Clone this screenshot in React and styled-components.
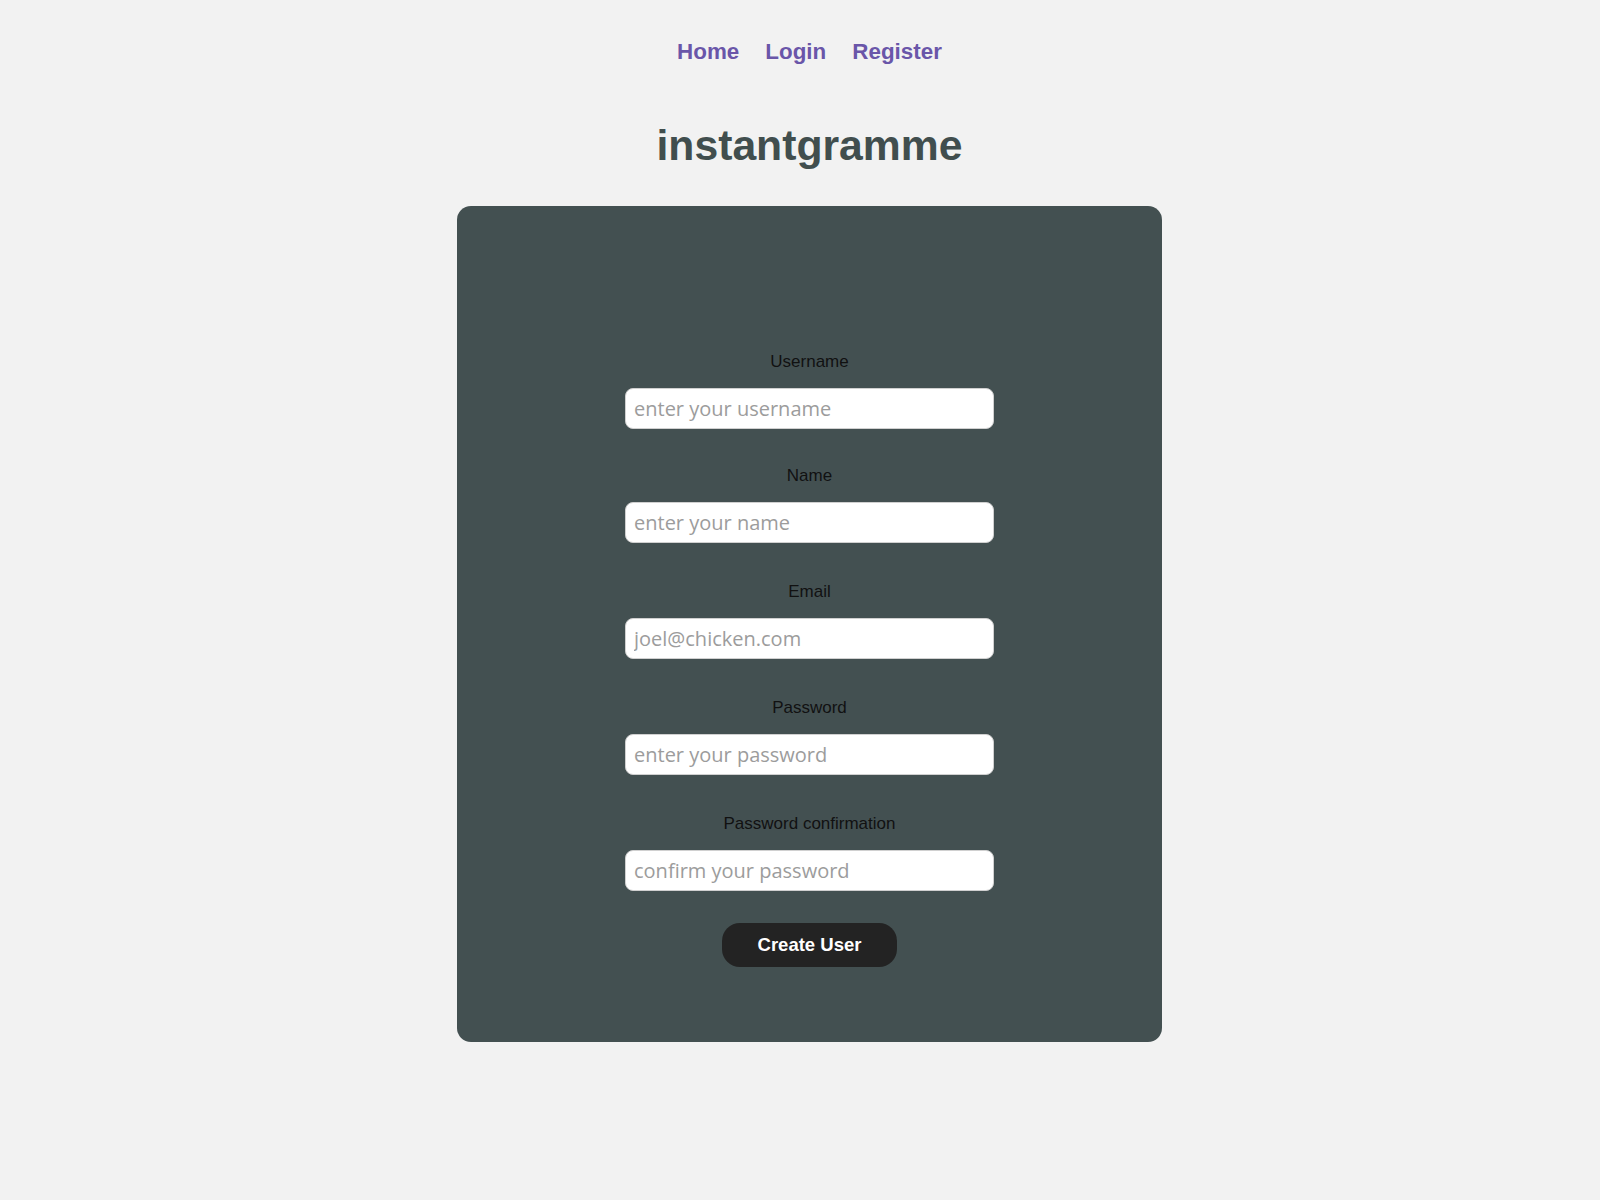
import React, { useState } from "react";
import styled, { createGlobalStyle } from "styled-components";

const GlobalStyle = createGlobalStyle`
  html, body {
    margin: 0;
    padding: 0;
    background-color: #f2f2f2;
    font-family: "Liberation Sans", Arial, sans-serif;
  }
`;

const Page = styled.div`
  min-height: 1200px;
  padding-left: 19px;
  display: flex;
  flex-direction: column;
  align-items: center;
`;

const Nav = styled.nav`
  display: flex;
  justify-content: center;
  gap: 26px;
  padding-top: 39px;
`;

const NavLink = styled.a`
  color: #6a56a9;
  font-size: 22.4px;
  font-weight: bold;
  text-decoration: none;
  cursor: pointer;

  &:hover {
    text-decoration: underline;
  }
`;

const Title = styled.h1`
  margin: 56px 0 36px;
  font-size: 42.7px;
  font-weight: bold;
  color: #414e4e;
  text-align: center;
`;

const Card = styled.div`
  width: 705px;
  height: 836px;
  box-sizing: border-box;
  padding-top: 146px;
  background-color: #435051;
  border-radius: 14px;
`;

const Form = styled.form`
  display: flex;
  flex-direction: column;
  align-items: center;
`;

const Field = styled.div`
  display: flex;
  flex-direction: column;
  align-items: center;
  gap: 16px;
  margin-bottom: 39px;

  &:first-of-type {
    margin-bottom: 37px;
  }

  &:last-of-type {
    margin-bottom: 32px;
  }
`;

const Label = styled.label`
  font-size: 17px;
  line-height: 20px;
  color: #111;
`;

const Input = styled.input`
  width: 369px;
  height: 41px;
  box-sizing: border-box;
  padding: 0 8px;
  border: 1px solid #d0d0d0;
  border-radius: 8px;
  background: #fff;
  font-family: "Open Sans", sans-serif;
  font-size: 20px;
  color: #333;
  outline: none;

  &::placeholder {
    color: #9c9c9c;
  }
`;

const SubmitButton = styled.button`
  width: 175px;
  height: 44px;
  border: none;
  border-radius: 18px;
  background-color: #232323;
  color: #fff;
  font-family: "Liberation Sans", Arial, sans-serif;
  font-size: 18.5px;
  font-weight: bold;
  cursor: pointer;
`;

const fields = [
  { id: "username", label: "Username", type: "text", placeholder: "enter your username" },
  { id: "name", label: "Name", type: "text", placeholder: "enter your name" },
  { id: "email", label: "Email", type: "email", placeholder: "joel@chicken.com" },
  { id: "password", label: "Password", type: "password", placeholder: "enter your password" },
  {
    id: "password_confirmation",
    label: "Password confirmation",
    type: "password",
    placeholder: "confirm your password",
  },
];

const App = () => {
  const [values, setValues] = useState({});

  const handleChange = (e) => {
    setValues({ ...values, [e.target.name]: e.target.value });
  };

  const handleSubmit = (e) => {
    e.preventDefault();
  };

  return (
    <>
      <GlobalStyle />
      <Page>
        <Nav>
          <NavLink href="#">Home</NavLink>
          <NavLink href="#">Login</NavLink>
          <NavLink href="#">Register</NavLink>
        </Nav>
        <Title>instantgramme</Title>
        <Card>
          <Form onSubmit={handleSubmit}>
            {fields.map((f) => (
              <Field key={f.id}>
                <Label htmlFor={f.id}>{f.label}</Label>
                <Input
                  id={f.id}
                  name={f.id}
                  type={f.type}
                  placeholder={f.placeholder}
                  value={values[f.id] || ""}
                  onChange={handleChange}
                />
              </Field>
            ))}
            <SubmitButton type="submit">Create User</SubmitButton>
          </Form>
        </Card>
      </Page>
    </>
  );
};

export default App;
